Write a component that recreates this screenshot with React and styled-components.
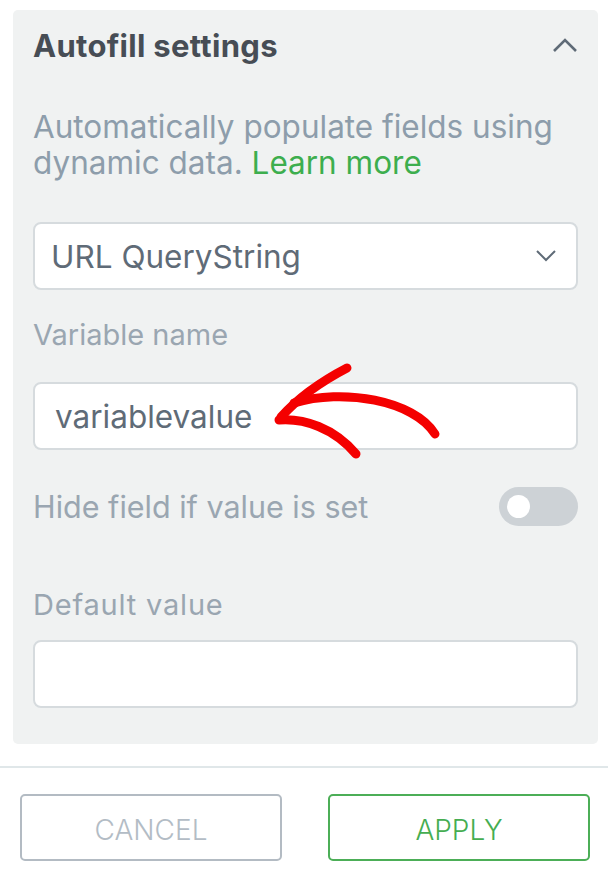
import React from "react";
import styled, { createGlobalStyle } from "styled-components";

const Global = createGlobalStyle`
  html, body { margin: 0; padding: 0; background: #fff; }
  body { font-family: Inter, "Noto Sans", Arial, sans-serif; -webkit-font-smoothing: antialiased; }
  * { box-sizing: border-box; }
`;

const Page = styled.div`
  width: 608px;
  height: 882px;
  padding-top: 10px;
  display: flex;
  flex-direction: column;
`;

const Panel = styled.section`
  margin: 0 10px 0 13px;
  background: #f0f2f2;
  border-radius: 5px;
  padding: 0 20px 36px 20px;
  display: flex;
  flex-direction: column;
`;

const Header = styled.div`
  height: 70px;
  display: flex;
  align-items: center;
  justify-content: space-between;
`;

const Title = styled.h2`
  margin: 0;
  font-size: 31px;
  font-weight: 700;
  color: #474d55;
  letter-spacing: 0.3px;
`;

const IconBtn = styled.span`
  display: flex;
  width: 26px;
  height: 26px;
  align-items: center;
  justify-content: center;
`;

const Description = styled.p`
  margin: 29px 0 0;
  font-size: 31.5px;
  line-height: 36px;
  color: #8d9dab;
`;

const Link = styled.a`
  color: #3dae4e;
  text-decoration: none;
`;

const Field = styled.div`
  position: relative;
  margin-top: ${(p) => p.$mt || 0}px;
  height: 68px;
  background: #fff;
  border: 2px solid #d6dbde;
  border-radius: 8px;
  display: flex;
  align-items: center;
  justify-content: space-between;
  padding: 0 20px 0 ${(p) => p.$pl || 16}px;
  font-size: 31.5px;
  color: #5f6b77;
`;

const Label = styled.div`
  margin-top: ${(p) => p.$mt || 0}px;
  font-size: 29px;
  line-height: 30px;
  color: #9aa6b1;
  letter-spacing: ${(p) => p.$ls || 0}px;
`;

const ToggleRow = styled.div`
  margin-top: 37px;
  display: flex;
  align-items: center;
  justify-content: space-between;
  height: 39px;
`;

const ToggleLabel = styled.span`
  font-size: 30.5px;
  color: #9aa6b1;
`;

const Toggle = styled.span`
  position: relative;
  width: 79px;
  height: 39px;
  border-radius: 20px;
  background: #cdd2d6;
  &::after {
    content: "";
    position: absolute;
    left: 8px;
    top: 8px;
    width: 23px;
    height: 23px;
    border-radius: 50%;
    background: #fff;
  }
`;

const Arrow = styled.svg`
  position: absolute;
  left: 0;
  top: 0;
  overflow: visible;
  pointer-events: none;
`;

const Divider = styled.hr`
  margin: 22px 0 0;
  border: 0;
  height: 2px;
  background: #e0e7e9;
`;

const Footer = styled.div`
  display: flex;
  justify-content: space-between;
  padding: 26px 18px 0 20px;
`;

const Button = styled.button`
  width: 262px;
  height: 67px;
  padding: 4px 0 0;
  background: #fff;
  border: 2px solid ${(p) => (p.$primary ? "#4cae57" : "#b3bbc3")};
  color: ${(p) => (p.$primary ? "#45ad51" : "#b3bcc5")};
  border-radius: 5px;
  font-family: Inter, "Noto Sans", Arial, sans-serif;
  font-size: 28px;
  font-weight: 300;
  text-transform: uppercase;
`;

export default function App() {
  return (
    <Page>
      <Global />
      <Panel>
        <Header>
          <Title>Autofill settings</Title>
          <IconBtn>
            <svg width="26" height="16" viewBox="0 0 26 16" fill="none">
              <path d="M2 14 L13 3 L24 14" stroke="#5f6b77" strokeWidth="2.6" />
            </svg>
          </IconBtn>
        </Header>
        <Description>
          Automatically populate fields using dynamic data. <Link href="#">Learn more</Link>
        </Description>
        <Field $mt={41}>
          <span>URL QueryString</span>
          <svg width="20" height="12" viewBox="0 0 20 12" fill="none">
            <path d="M1 1 L10 10 L19 1" stroke="#5f6b77" strokeWidth="2" />
          </svg>
        </Field>
        <Label $mt={30}>Variable name</Label>
        <Field $mt={32} $pl={20}>
          <span>variablevalue</span>
          <Arrow width="1" height="1">
            <g
              transform="translate(-33 -382)"
              stroke="#f40000"
              strokeWidth="9"
              strokeLinecap="round"
              fill="none"
            >
              <path d="M345 366 C 322 378, 296 396, 279 415" />
              <path d="M277 418 C 302 416, 332 426, 354 452" />
              <path d="M292 401 C 340 386, 412 398, 433 432" />
            </g>
          </Arrow>
        </Field>
        <ToggleRow>
          <ToggleLabel>Hide field if value is set</ToggleLabel>
          <Toggle />
        </ToggleRow>
        <Label $mt={64} $ls={0.8}>Default value</Label>
        <Field $mt={20} />
      </Panel>
      <Divider />
      <Footer>
        <Button>Cancel</Button>
        <Button $primary>Apply</Button>
      </Footer>
    </Page>
  );
}
